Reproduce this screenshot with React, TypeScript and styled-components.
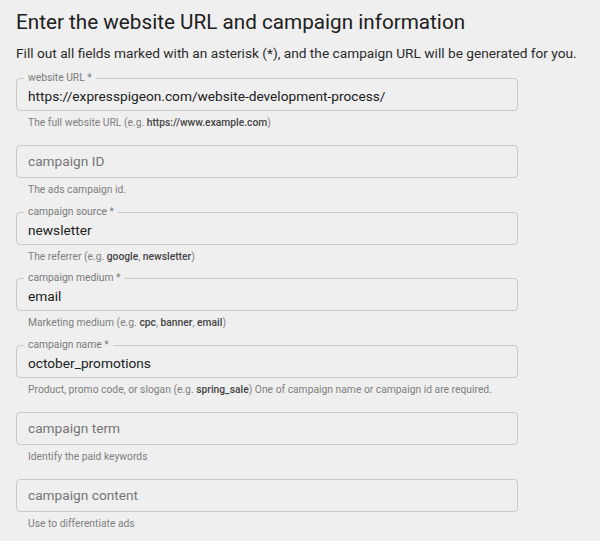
import React from "react";
import styled, { createGlobalStyle } from "styled-components";

const GlobalStyle = createGlobalStyle`
  html, body {
    margin: 0;
    padding: 0;
    background: #efefef;
  }
  body {
    font-family: Roboto, "Liberation Sans", Arial, sans-serif;
  }
`;

const Page = styled.div`
  padding: 8px 16px 0;
  width: 502px;
`;

const Title = styled.h1`
  margin: 0;
  font-size: 20.7px;
  line-height: 28px;
  font-weight: 400;
  color: #212121;
`;

const Intro = styled.p`
  margin: 7px 0 0;
  font-size: 13.7px;
  line-height: 20px;
  color: #2b2b2b;
  white-space: nowrap;
`;

const Form = styled.div`
  display: flex;
  flex-direction: column;
  gap: 15px;
  margin-top: 15px;
`;

const Field = styled.div`
  display: flex;
  flex-direction: column;
  gap: 5px;
`;

const Box = styled.div`
  position: relative;
  height: 33px;
  box-sizing: border-box;
  border: 1px solid #c9c9c9;
  border-radius: 4px;
  padding: 0 11px;
  display: flex;
  align-items: center;
`;

const Label = styled.span`
  position: absolute;
  left: 7px;
  top: -7px;
  padding: 0 4px;
  font-size: 10.3px;
  line-height: 12px;
  color: #7a7a7a;
  background: #efefef;
`;

const Input = styled.input<{ $filled: boolean }>`
  width: 100%;
  border: none;
  outline: none;
  background: transparent;
  padding: ${(p) => (p.$filled ? "3px 0 0" : "0")};
  font-family: inherit;
  font-size: 13.7px;
  color: #212121;

  &::placeholder {
    color: #767676;
    opacity: 1;
  }
`;

const Help = styled.div`
  padding-left: 12px;
  font-size: 10.3px;
  line-height: 13.8px;
  color: #808080;
  white-space: nowrap;

  b {
    font-weight: 500;
    color: #454545;
  }
`;

type FieldDef = {
  label: string;
  required?: boolean;
  value?: string;
  help: React.ReactNode;
};

const fields: FieldDef[] = [
  {
    label: "website URL",
    required: true,
    value: "https://expresspigeon.com/website-development-process/",
    help: (
      <>
        The full website URL (e.g. <b>https://www.example.com</b>)
      </>
    ),
  },
  { label: "campaign ID", help: "The ads campaign id." },
  {
    label: "campaign source",
    required: true,
    value: "newsletter",
    help: (
      <>
        The referrer (e.g. <b>google</b>, <b>newsletter</b>)
      </>
    ),
  },
  {
    label: "campaign medium",
    required: true,
    value: "email",
    help: (
      <>
        Marketing medium (e.g. <b>cpc</b>, <b>banner</b>, <b>email</b>)
      </>
    ),
  },
  {
    label: "campaign name",
    required: true,
    value: "october_promotions",
    help: (
      <>
        Product, promo code, or slogan (e.g. <b>spring_sale</b>) One of
        campaign name or campaign id are required.
      </>
    ),
  },
  { label: "campaign term", help: "Identify the paid keywords" },
  { label: "campaign content", help: "Use to differentiate ads" },
];

const App = () => {
  return (
    <>
      <GlobalStyle />
      <Page>
        <Title>Enter the website URL and campaign information</Title>
        <Intro>
          Fill out all fields marked with an asterisk (*), and the campaign
          URL will be generated for you.
        </Intro>
        <Form>
          {fields.map((f) => (
            <Field key={f.label}>
              <Box>
                {f.value && (
                  <Label>
                    {f.label}
                    {f.required ? " *" : ""}
                  </Label>
                )}
                <Input
                  $filled={!!f.value}
                  defaultValue={f.value}
                  placeholder={f.value ? undefined : f.label}
                />
              </Box>
              <Help>{f.help}</Help>
            </Field>
          ))}
        </Form>
      </Page>
    </>
  );
};

export default App;
